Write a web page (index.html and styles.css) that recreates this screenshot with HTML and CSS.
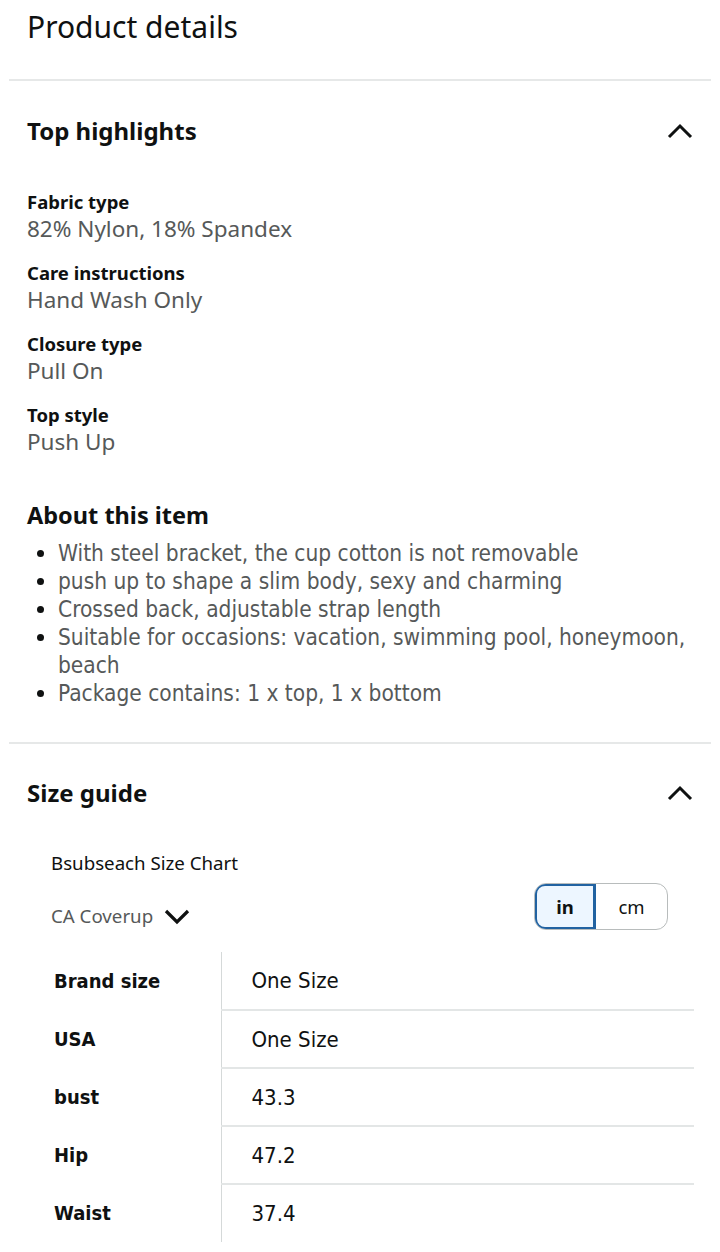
FILE: index.html
```html
<!DOCTYPE html>
<html lang="en">
<head>
<meta charset="utf-8">
<title>Product details</title>
<link rel="stylesheet" href="styles.css">
</head>
<body>
<div class="page">
  <h1 class="page-title">Product details</h1>
  <hr class="divider">

  <section class="section">
    <div class="section-head">
      <h2 class="section-title">Top highlights</h2>
      <svg class="chev" width="26" height="18" viewBox="0 0 26 18"><polyline points="2,15 13,4 24,15" fill="none" stroke="#0f1111" stroke-width="3"/></svg>
    </div>
    <dl class="facts">
      <div class="fact"><dt>Fabric type</dt><dd>82% Nylon, 18% Spandex</dd></div>
      <div class="fact"><dt>Care instructions</dt><dd>Hand Wash Only</dd></div>
      <div class="fact"><dt>Closure type</dt><dd>Pull On</dd></div>
      <div class="fact"><dt>Top style</dt><dd>Push Up</dd></div>
    </dl>
    <h2 class="about-title">About this item</h2>
    <ul class="bullets">
      <li>With steel bracket, the cup cotton is not removable</li>
      <li>push up to shape a slim body, sexy and charming</li>
      <li>Crossed back, adjustable strap length</li>
      <li>Suitable for occasions: vacation, swimming pool, honeymoon, beach</li>
      <li>Package contains: 1 x top, 1 x bottom</li>
    </ul>
  </section>
  <hr class="divider">

  <section class="section size">
    <div class="section-head">
      <h2 class="section-title">Size guide</h2>
      <svg class="chev" width="26" height="18" viewBox="0 0 26 18"><polyline points="2,15 13,4 24,15" fill="none" stroke="#0f1111" stroke-width="3"/></svg>
    </div>
    <div class="chart-name">Bsubseach Size Chart</div>
    <div class="chart-controls">
      <div class="region">CA Coverup
        <svg width="26" height="18" viewBox="0 0 26 18"><polyline points="2,4 13,15 24,4" fill="none" stroke="#0f1111" stroke-width="3.2"/></svg>
      </div>
      <div class="units">
        <span class="unit active">in</span>
        <span class="unit">cm</span>
      </div>
    </div>
    <table class="chart">
      <tr><th>Brand size</th><td>One Size</td></tr>
      <tr><th>USA</th><td>One Size</td></tr>
      <tr><th>bust</th><td>43.3</td></tr>
      <tr><th>Hip</th><td>47.2</td></tr>
      <tr><th>Waist</th><td>37.4</td></tr>
    </table>
  </section>
</div>
</body>
</html>
```

FILE: styles.css
```css
* { box-sizing: border-box; }
html, body { margin: 0; padding: 0; background: #fff; }
body {
  font-family: "Noto Sans", "Open Sans", sans-serif;
  color: #0f1111;
  width: 720px;
}
.page { padding: 0; }
.page-title {
  margin: 0;
  padding: 7px 27px 0;
  height: 79px;
  font-size: 30px;
  line-height: 40px;
  font-weight: 400;
}
.divider {
  margin: 0 9px;
  border: 0;
  height: 2px;
  background: #e6e8e8;
}
.section { padding: 35px 27px 0; }
.section-head {
  display: flex;
  align-items: center;
  justify-content: space-between;
  height: 30px;
}
.section-title {
  margin: 0;
  font-size: 24px;
  line-height: 30px;
  font-weight: 700;
}
.chev { display: block; margin-right: 0; }
.facts {
  margin: 44px 0 0;
  display: flex;
  flex-direction: column;
  gap: 18px;
}
.fact dt {
  font-size: 18.5px;
  line-height: 24px;
  font-weight: 700;
}
.fact dd {
  margin: 0;
  padding-top: 1px;
  font-size: 22.5px;
  line-height: 28px;
  color: #565959;
}
.about-title {
  margin: 44px 0 0;
  font-size: 23.5px;
  line-height: 30px;
  font-weight: 700;
}
.bullets {
  margin: 9px 0 35px;
  padding-left: 31px;
  font-family: "Liberation Sans Narrow", "DejaVu Sans Condensed", sans-serif;
  font-size: 22.5px;
  line-height: 28px;
  color: #565959;
}
.bullets li::marker { color: #0f1111; }

.size { padding-top: 34px; }
.chart-name {
  margin: 43px 0 0 24px;
  font-size: 18.7px;
  line-height: 24px;
}
.chart-controls {
  display: flex;
  justify-content: space-between;
  align-items: flex-start;
  margin: 8px 25px 0 24px;
}
.region {
  margin-top: 21px;
  display: flex;
  align-items: center;
  gap: 11px;
  font-size: 18.7px;
  line-height: 24px;
  color: #565959;
}
.region svg { display: block; }
.units {
  display: flex;
  height: 47px;
  border: 1px solid #b8bcbc;
  border-radius: 12px;
  overflow: hidden;
  font-size: 18.5px;
}
.unit {
  display: flex;
  align-items: center;
  justify-content: center;
  width: 71px;
}
.unit.active {
  width: 62px;
  height: 47px;
  margin: -1px 0 -1px -1px;
  border: 3px solid #2162a1;
  border-radius: 11px 0 0 11px;
  background: #edf6ff;
  font-weight: 700;
}
.chart {
  margin: 22px 0 0 -3px;
  border-collapse: collapse;
  width: 670px;
  font-family: "Liberation Sans Narrow", "DejaVu Sans Condensed", sans-serif;
}
.chart th, .chart td {
  height: 58px;
  padding: 0 0 0 30px;
  text-align: left;
  vertical-align: middle;
}
.chart th {
  width: 197px;
  font-size: 20px;
  font-weight: 700;
  border-right: 1px solid #d5d9d9;
}
.chart td {
  font-size: 22px;
  font-weight: 400;
}
.chart tr + tr td { border-top: 2px solid #e3e6e6; }
```
